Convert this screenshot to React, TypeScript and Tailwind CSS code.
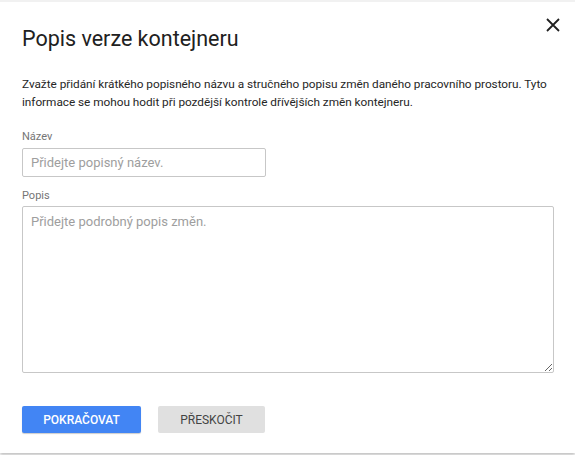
import React, { useState } from "react";

const CloseIcon = () => (
  <svg width="14" height="14" viewBox="0 0 14 14" fill="none">
    <path d="M1 1L13 13M13 1L1 13" stroke="#212121" strokeWidth="1.8" />
  </svg>
);

const App: React.FC = () => {
  const [name, setName] = useState("");
  const [desc, setDesc] = useState("");

  return (
    <div className="w-[575px] h-[455px] bg-white font-['Roboto',sans-serif] text-[#212121]">
      {/* dialog */}
      <div className="relative h-[453px] border-t-2 border-[#f1f1f1] shadow-[0_2px_3px_rgba(0,0,0,0.25)] px-[22px]">
        <button className="absolute right-[14px] top-[15px] p-[1px]">
          <CloseIcon />
        </button>

        <h1 className="pt-[22px] text-[21.5px] leading-[30px] font-normal text-[#212121]">
          Popis verze kontejneru
        </h1>

        <p className="mt-[21px] w-[540px] text-[11.8px] leading-[18px] tracking-[-0.03px] text-[#262626]">
          Zvažte přidání krátkého popisného názvu a stručného popisu změn daného pracovního prostoru. Tyto
          informace se mohou hodit při pozdější kontrole dřívějších změn kontejneru.
        </p>

        <label className="block mt-[19px] text-[11px] leading-[14px] text-[#757575]">Název</label>
        <input
          value={name}
          onChange={(e) => setName(e.target.value)}
          placeholder="Přidejte popisný název."
          className="block mt-[4px] w-[244px] h-[29px] border border-[#c7c7c7] rounded-[2px] px-[8px] text-[13px] placeholder:text-[#9e9e9e] outline-none"
        />

        <label className="block mt-[12px] text-[11px] leading-[14px] text-[#757575]">Popis</label>
        <textarea
          value={desc}
          onChange={(e) => setDesc(e.target.value)}
          placeholder="Přidejte podrobný popis změn."
          className="block mt-[3px] w-[532px] h-[167px] border border-[#c7c7c7] rounded-[2px] px-[8px] pt-[7px] text-[13px] leading-[16px] placeholder:text-[#9e9e9e] outline-none"
        />

        <div className="flex gap-[17px] mt-[33px]">
          <button className="w-[119px] h-[27px] rounded-[2px] bg-[#4285f4] text-white text-[12px] font-medium shadow-[0_1px_1px_rgba(0,0,0,0.2)]">
            POKRAČOVAT
          </button>
          <button className="w-[107px] h-[27px] rounded-[2px] bg-[#e0e0e0] text-[#444] text-[12px] font-normal">
            PŘESKOČIT
          </button>
        </div>
      </div>
    </div>
  );
};

export default App;
